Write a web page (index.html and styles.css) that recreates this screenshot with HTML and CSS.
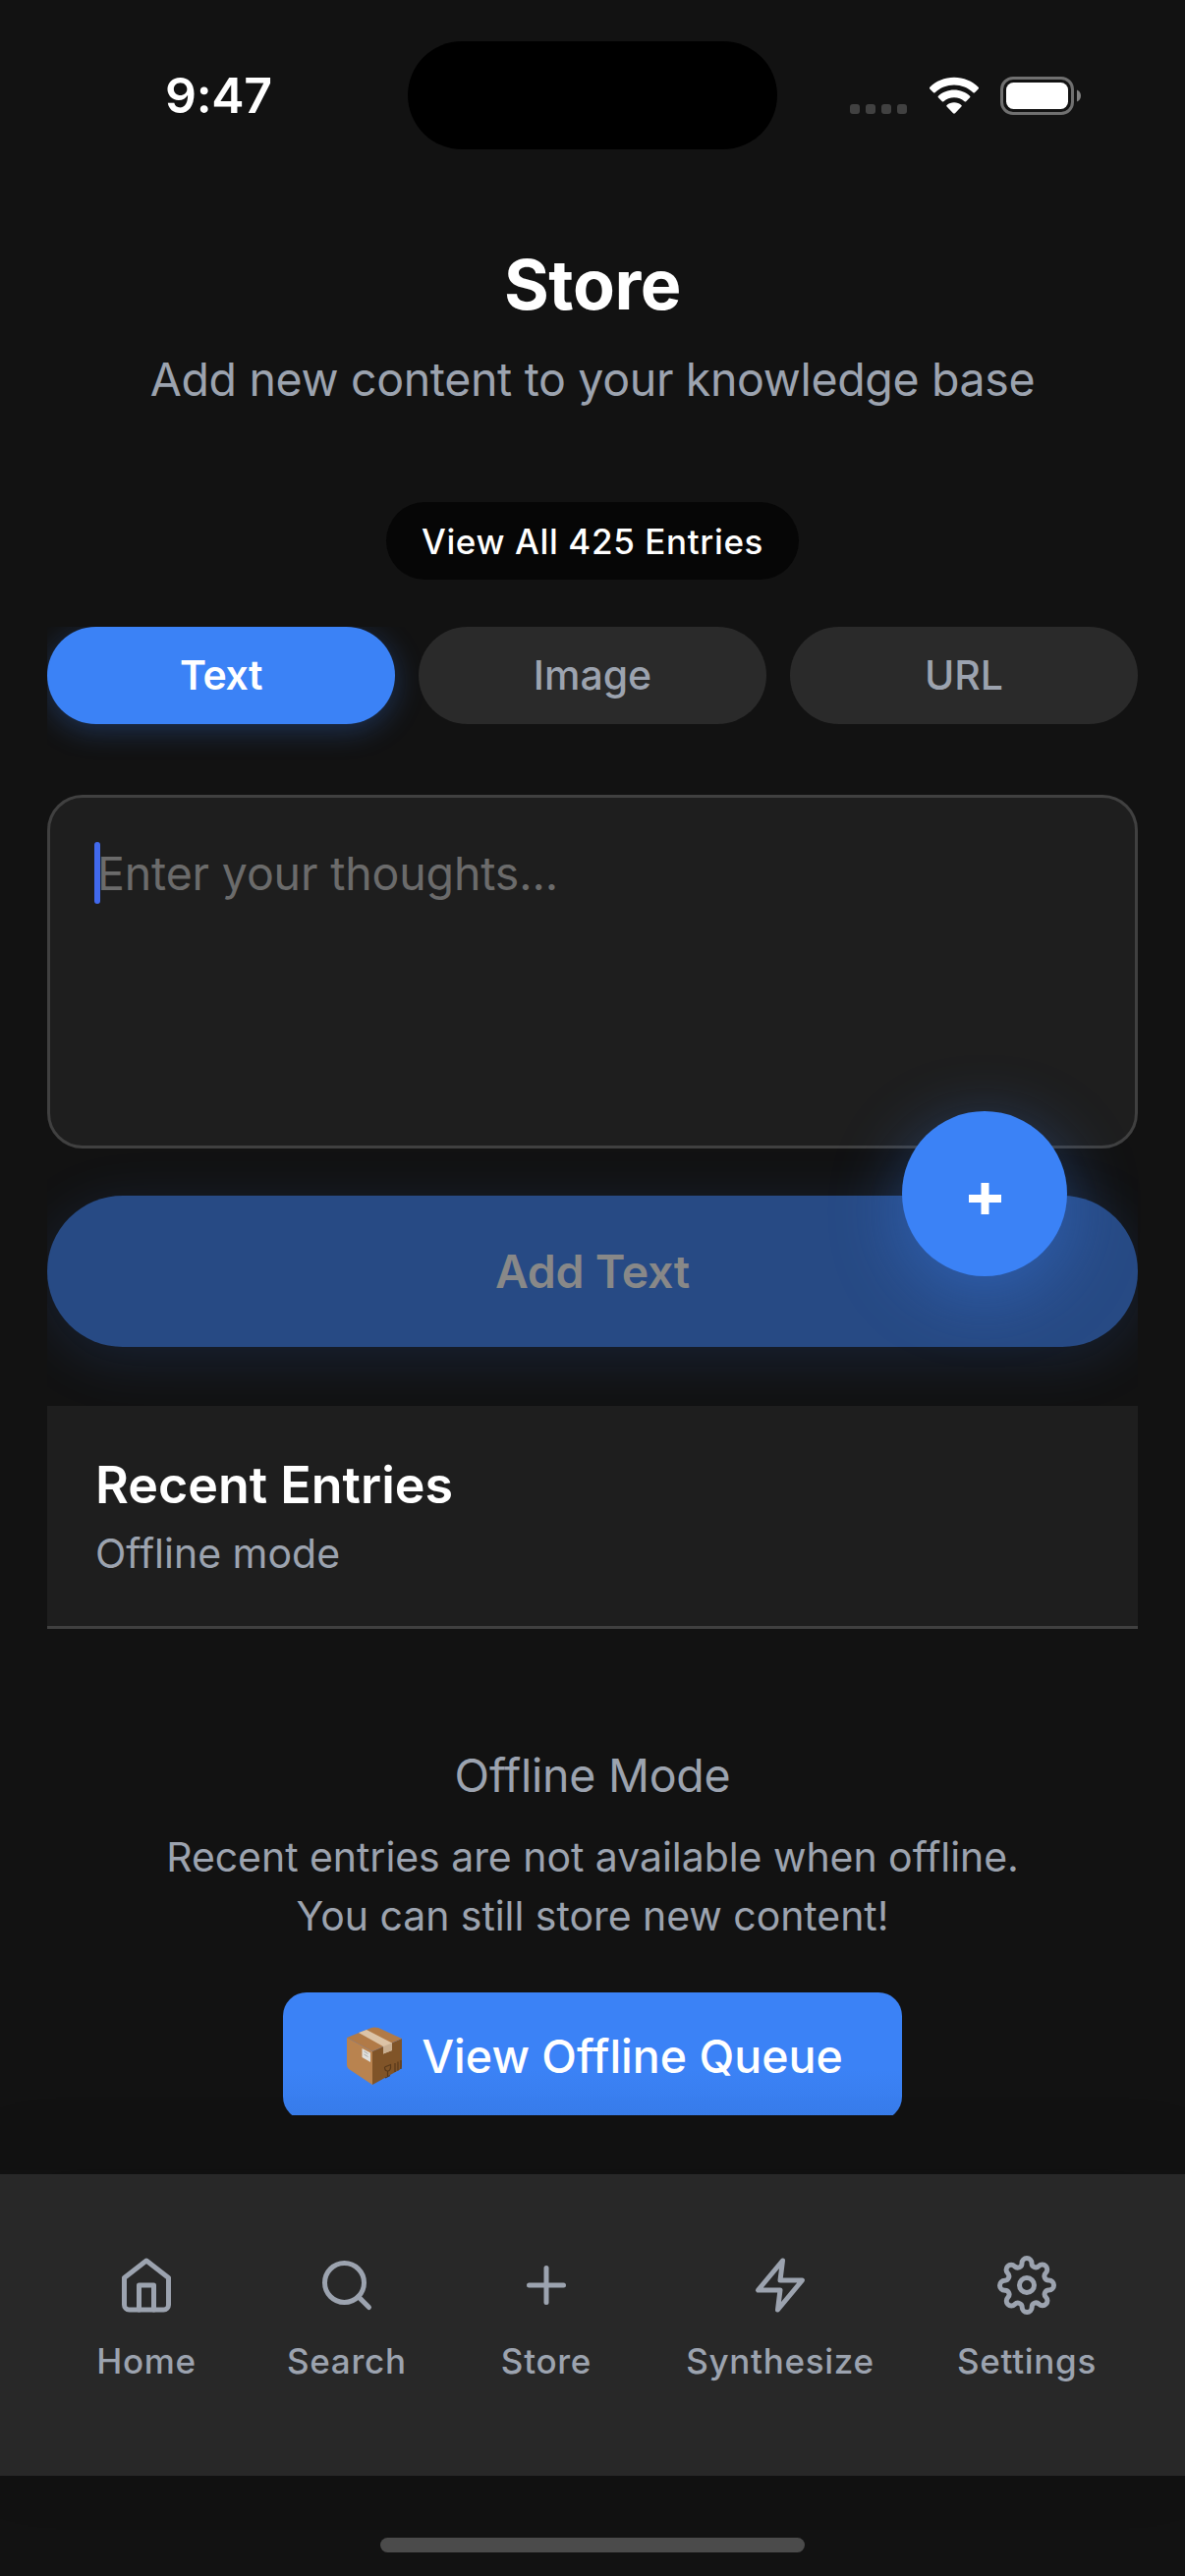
FILE: index.html
```
<!DOCTYPE html>
<html lang="en">
<head>
  <meta charset="UTF-8">
  <meta name="viewport" content="width=device-width, initial-scale=1.0">
  <title>Store</title>
  <link rel="stylesheet" href="styles.css">
</head>
<body>
  <div class="status-bar">
    <div class="time">9:47</div>
    <div class="island"></div>
    <div class="status-icons">
      <svg class="signal" width="58" height="10" viewBox="0 0 58 10" fill="#414141">
        <rect x="0" width="10" height="10" rx="3"/>
        <rect x="16" width="10" height="10" rx="3"/>
        <rect x="32" width="10" height="10" rx="3"/>
        <rect x="48" width="10" height="10" rx="3"/>
      </svg>
      <svg class="wifi" width="52" height="38" viewBox="0 0 52 38" fill="#fff">
        <path d="M26 .8C35.600 .8 44.500 4.500 50.700 10.700Q51.500 11.500 50.700 12.400L47 16.200Q46.200 16.900 45.400 16.200C40.200 11.300 33.400 8.500 26 8.500S11.800 11.300 6.600 16.200Q5.800 16.900 5 16.200L1.300 12.400Q.5 11.500 1.300 10.700C7.500 4.500 16.400 .8 26 .8Z"/>
        <path d="M26 13.500C32.200 13.500 37.900 15.800 42.100 19.700Q42.900 20.500 42.100 21.300L38.200 25.200Q37.400 25.900 36.600 25.200C33.800 22.700 30 21.200 26 21.200S18.200 22.700 15.400 25.200Q14.600 25.900 13.800 25.200L9.900 21.300Q9.100 20.500 9.900 19.700C14.100 15.800 19.800 13.500 26 13.500Z"/>
        <path d="M26 26.300C28.800 26.300 31.400 27.200 33.400 28.900Q34.200 29.700 33.400 30.600L27 37.300Q26 38.200 25 37.300L18.600 30.600Q17.800 29.700 18.600 28.900C20.600 27.200 23.200 26.300 26 26.300Z"/>
      </svg>
      <svg class="battery" width="83" height="39" viewBox="0 0 83 39">
        <rect x="1.500" y="1.500" width="72" height="36" rx="11.500" fill="none" stroke="#707070" stroke-width="3"/>
        <rect x="6" y="6" width="63" height="27" rx="7.500" fill="#fff"/>
        <path d="M78 13.500C80.500 14.500 82 16.800 82 19.500S80.500 24.500 78 25.500Z" fill="#808080"/>
      </svg>
    </div>
  </div>

  <header>
    <h1>Store</h1>
    <p class="subtitle">Add new content to your knowledge base</p>
    <button class="view-all"><span>View All 425 Entries</span></button>
  </header>

  <main>
    <div class="tabs">
      <button class="tab active">Text</button>
      <button class="tab">Image</button>
      <button class="tab">URL</button>
    </div>

    <div class="editor">
      <span class="cursor"></span>
      <span class="placeholder">Enter your thoughts...</span>
    </div>

    <button class="add-btn">Add Text</button>

    <section class="recent">
      <h2>Recent Entries</h2>
      <p>Offline mode</p>
    </section>

    <section class="empty">
      <h3>Offline Mode</h3>
      <p>Recent entries are not available when offline.</p>
      <p>You can still store new content!</p>
      <button class="queue-btn">
        <svg class="box" width="58" height="60" viewBox="0 0 58 60">
          <path d="M1 11L27 25V59L3 43Q1 41.500 1 39Z" fill="#b9834f"/>
          <path d="M27 25L57 12V40Q57 42 55 43.500L27 59Z" fill="#805428"/>
          <path d="M1 11L26 1Q29 0 33 1L57 12L27 25Z" fill="#b17a47"/>
          <path d="M13 6L21 3L47 16.500V24L38 27.500V20Z" fill="#dcc3a6"/>
          <path d="M38 20L47 16.500V24L38 27.500Z" fill="#c8ae91"/>
          <path d="M16.500 22L25 26.500V36L16.500 31Z" fill="#e1e0dc"/>
          <path d="M18.500 25L22.500 27.500M18.500 28L22.500 30.500" stroke="#aaa9a5" stroke-width="1"/>
          <path d="M39.500 41L45.500 38.500C46 43 44.500 45 42.500 45S39.500 43.500 39.500 41M42.500 45V51M40 52L45 49.500M50 37V46M53 35.500V44.500M56 34V43" fill="none" stroke="#57381a" stroke-width="1.200"/>
        </svg>
        <span>View Offline Queue</span>
      </button>
    </section>
  </main>

  <button class="fab">
    <svg width="33" height="32" viewBox="0 0 33 32"><path d="M16.500 0V32M0 16H33" stroke="#fff" stroke-width="8"/></svg>
  </button>

  <nav>
    <a class="nav-item">
      <svg viewBox="0 0 24 24"><path d="M3 9l9-7 9 7v11a2 2 0 0 1-2 2H5a2 2 0 0 1-2-2z"/><polyline points="9 22 9 12 15 12 15 22"/></svg>
      <span>Home</span>
    </a>
    <a class="nav-item">
      <svg viewBox="0 0 24 24"><circle cx="11" cy="11" r="8"/><line x1="21" y1="21" x2="16.65" y2="16.65"/></svg>
      <span>Search</span>
    </a>
    <a class="nav-item">
      <svg viewBox="0 0 24 24"><line x1="12" y1="5" x2="12" y2="19"/><line x1="5" y1="12" x2="19" y2="12"/></svg>
      <span>Store</span>
    </a>
    <a class="nav-item">
      <svg viewBox="0 0 24 24"><polygon points="13 2 3 14 12 14 11 22 21 10 12 10 13 2"/></svg>
      <span>Synthesize</span>
    </a>
    <a class="nav-item">
      <svg viewBox="0 0 24 24"><circle cx="12" cy="12" r="3"/><path d="M19.4 15a1.65 1.65 0 0 0 .33 1.82l.06.06a2 2 0 0 1 0 2.83 2 2 0 0 1-2.83 0l-.06-.06a1.65 1.65 0 0 0-1.82-.33 1.65 1.65 0 0 0-1 1.51V21a2 2 0 0 1-2 2 2 2 0 0 1-2-2v-.09A1.65 1.65 0 0 0 9 19.4a1.65 1.65 0 0 0-1.82.33l-.06.06a2 2 0 0 1-2.83 0 2 2 0 0 1 0-2.83l.06-.06a1.65 1.65 0 0 0 .33-1.82 1.65 1.65 0 0 0-1.51-1H3a2 2 0 0 1-2-2 2 2 0 0 1 2-2h.09A1.65 1.65 0 0 0 4.6 9a1.65 1.65 0 0 0-.33-1.82l-.06-.06a2 2 0 0 1 0-2.83 2 2 0 0 1 2.83 0l.06.06a1.65 1.65 0 0 0 1.82.33H9a1.65 1.65 0 0 0 1-1.51V3a2 2 0 0 1 2-2 2 2 0 0 1 2 2v.09a1.65 1.65 0 0 0 1 1.51 1.65 1.65 0 0 0 1.82-.33l.06-.06a2 2 0 0 1 2.83 0 2 2 0 0 1 0 2.83l-.06.06a1.65 1.65 0 0 0-.33 1.82V9a1.65 1.65 0 0 0 1.51 1H21a2 2 0 0 1 2 2 2 2 0 0 1-2 2h-.09a1.65 1.65 0 0 0-1.51 1z"/></svg>
      <span>Settings</span>
    </a>
  </nav>

  <div class="home-indicator"></div>
</body>
</html>
```

FILE: styles.css
```
* {
  box-sizing: border-box;
}

body {
  display: flex;
  flex-direction: column;
  position: relative;
  width: 1206px;
  height: 2622px;
  margin: 0;
  overflow: hidden;
  font-family: Inter, "Liberation Sans", sans-serif;
  background-color: #121212;
  color: #fff;
}

h1, h2, h3, p {
  margin: 0;
}

button {
  display: flex;
  align-items: center;
  justify-content: center;
  padding: 0;
  border: none;
  font-family: inherit;
  color: inherit;
}

svg {
  display: block;
  flex: none;
}

/* Status bar */
.status-bar {
  display: grid;
  grid-template-columns: 415px 376px 415px;
  height: 152px;
  padding-top: 42px;
}

.time {
  padding-left: 168px;
  font-size: 50px;
  font-weight: 600;
  line-height: 110px;
  letter-spacing: -0.3px;
}

.island {
  border-radius: 55px;
  background-color: #000;
}

.status-icons {
  display: flex;
  align-items: flex-end;
  padding: 0 0 36px 74px;
}

.wifi {
  margin-left: 21.500px;
}

.battery {
  margin-left: 21.500px;
  margin-bottom: -1px;
}

/* Header */
header {
  display: flex;
  flex-direction: column;
  align-items: center;
  padding-top: 96px;
  text-align: center;
}

h1 {
  font-size: 70px;
  font-weight: 700;
  line-height: 84px;
  letter-spacing: -0.4px;
}

.subtitle {
  margin-top: 24px;
  font-size: 46.500px;
  line-height: 60px;
  letter-spacing: -0.35px;
  color: #9ca3af;
}

.view-all {
  width: 420px;
  height: 79px;
  margin-top: 95px;
  border-radius: 40px;
  background-color: #060606;
  font-size: 35px;
  font-weight: 500;
  letter-spacing: 0.63px;
}

/* Scrolling content */
main {
  height: 1515px;
  margin: 48px 48px 0;
  overflow: hidden;
}

.tabs {
  display: grid;
  grid-template-columns: repeat(3, 1fr);
  gap: 24px;
}

.tab {
  height: 99px;
  padding-bottom: 2px;
  border-radius: 50px;
  background-color: #2a2a2a;
  font-size: 41px;
  font-weight: 500;
  color: #9ca3af;
}

.tab.active {
  background-color: #3b82f6;
  box-shadow: 0 6px 30px rgba(59, 130, 246, 0.3);
  font-weight: 600;
  letter-spacing: -0.4px;
  color: #fff;
}

.editor {
  display: flex;
  height: 360px;
  margin-top: 72px;
  padding: 45px;
  border: 3px solid #404040;
  border-radius: 36px;
  background-color: #1e1e1e;
}

.cursor {
  width: 6px;
  height: 63px;
  border-radius: 3px;
  background-color: #4169ec;
}

.placeholder {
  margin-top: 3px;
  margin-left: -3px;
  font-size: 46.500px;
  line-height: 58px;
  letter-spacing: -0.17px;
  color: #6b6b6b;
}

.add-btn {
  width: 100%;
  height: 154px;
  margin-top: 48px;
  padding-bottom: 1px;
  border-radius: 77px;
  background-color: #274a84;
  box-shadow: 0 12px 60px rgba(59, 130, 246, 0.15);
  font-size: 46.500px;
  font-weight: 600;
  letter-spacing: -0.25px;
  color: #888;
}

.recent {
  height: 227px;
  margin-top: 60px;
  padding: 48px 49px;
  border-bottom: 3px solid #404040;
  background-color: #1e1e1e;
}

h2 {
  font-size: 52px;
  font-weight: 600;
  line-height: 66px;
}

.recent p {
  margin-top: 11px;
  font-size: 41px;
  line-height: 50px;
  color: #9ca3af;
}

.empty {
  display: flex;
  flex-direction: column;
  align-items: center;
  padding-top: 119px;
  color: #9ca3af;
}

h3 {
  margin-bottom: 23px;
  font-size: 46.500px;
  font-weight: 400;
  line-height: 60px;
  letter-spacing: -0.25px;
}

.empty p {
  font-size: 41px;
  line-height: 60px;
  letter-spacing: -0.05px;
}

.queue-btn {
  gap: 19px;
  width: 630px;
  height: 130px;
  margin-top: 48px;
  padding-left: 4px;
  border-radius: 24px;
  background: linear-gradient(#3b82f6 60%, #387cea);
  font-size: 46.500px;
  font-weight: 500;
  color: #fff;
}

/* Floating button */
.fab {
  position: absolute;
  top: 1131px;
  left: 918px;
  width: 168px;
  height: 168px;
  border-radius: 50%;
  background-color: #3b82f6;
  box-shadow: 0 18px 72px rgba(59, 130, 246, 0.4);
}

.fab svg {
  margin-top: 9px;
}

/* Bottom navigation */
nav {
  display: grid;
  grid-template-columns: 204px 203.600px 202.800px 273.200px 228.800px;
  height: 307px;
  margin-top: 60px;
  padding: 83px 47px 0;
  background-color: #282828;
  box-shadow: 0 -12px 72px rgba(0, 0, 0, 0.1);
}

.nav-item {
  display: flex;
  flex-direction: column;
  align-items: center;
  gap: 25px;
  font-size: 35px;
  font-weight: 500;
  line-height: 44px;
  letter-spacing: 0.7px;
  color: #9ca3af;
}

.nav-item svg {
  width: 60px;
  height: 60px;
  fill: none;
  stroke: currentColor;
  stroke-width: 2;
  stroke-linecap: round;
  stroke-linejoin: round;
}

.home-indicator {
  width: 432px;
  height: 15px;
  margin: 63px auto 0;
  border-radius: 8px;
  background-color: #4b4b4b;
}
```
